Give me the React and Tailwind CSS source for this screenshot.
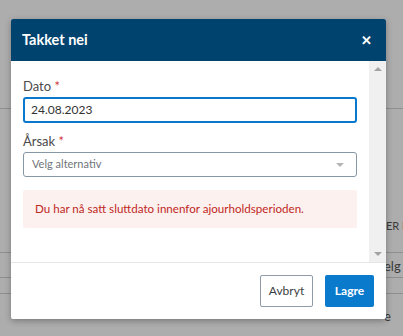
import React from 'react';

function Label({ children }) {
  return (
    <label className="block text-[13px] leading-[18px] text-[#4a4a4a] mb-[2px]">
      {children} <span className="text-[#d0393e]">*</span>
    </label>
  );
}

export default function App() {
  return (
    <div
      className="relative w-[403px] h-[336px] overflow-hidden bg-[#adadad]"
      style={{ fontFamily: 'Lato, "Noto Sans", sans-serif' }}
    >
      {/* page behind the overlay */}
      <div className="absolute left-0 right-0 top-[108px] h-px bg-[#8e8e8e]" />
      <div className="absolute left-0 right-0 top-[252px] h-px bg-[#8e8e8e]" />
      <div className="absolute left-0 right-0 top-[277px] h-px bg-[#8e8e8e]" />
      <div className="absolute left-0 right-0 top-[293px] h-px bg-[#8e8e8e]" />
      <div className="absolute left-[386px] right-0 top-[218px] text-[11px] text-[#3a3a3a] whitespace-nowrap overflow-hidden">ER P</div>
      <div className="absolute left-[384px] right-0 top-[257px] text-[13px] text-[#3a3a3a] whitespace-nowrap overflow-hidden">elg a</div>
      <div className="absolute left-[384px] top-[307px] text-[13px] text-[#3a3a3a] whitespace-nowrap">e</div>

      {/* modal */}
      <div className="absolute left-[11px] top-[19px] w-[375px] h-[300px] bg-white rounded-[2px] shadow-[0_2px_6px_rgba(0,0,0,0.3)] flex flex-col overflow-hidden">
        <div className="h-[42px] bg-[#00436e] flex items-center justify-between pl-[11px] pr-[14px]">
          <h2 className="text-[14.5px] font-bold text-white">Takket nei</h2>
          <span className="text-white text-[13px] font-bold leading-none">✕</span>
        </div>

        <div className="flex h-[202px] border-b border-[#e6e6e6]">
          <div className="flex-1 pl-[12px] pr-[12px] pt-[16px]">
            <Label>Dato</Label>
            <div className="h-[26px] border-2 border-[#0a78cc] rounded-[3px] flex items-center px-[6px] text-[12px] text-[#333]">
              24.08.2023
            </div>
            <div className="mt-[9px]">
              <Label>Årsak</Label>
              <div className="h-[25px] border border-[#8796a3] rounded-[3px] flex items-center justify-between pl-[8px] pr-[12px] text-[11px] text-[#6f757b]">
                <span>Velg alternativ</span>
                <span className="w-0 h-0 border-l-[4px] border-r-[4px] border-t-[4px] border-l-transparent border-r-transparent border-t-[#b5b5b5]" />
              </div>
            </div>
            <div className="mt-[13px] h-[38px] bg-[#fdf1ef] rounded-[2px] flex items-center px-[12px] text-[11.6px] text-[#c0281e]">
              Du har nå satt sluttdato innenfor ajourholdsperioden.
            </div>
          </div>
          <div className="w-[17px] bg-[#f0f0f0] flex flex-col items-center justify-between py-[6px]">
            <span className="w-0 h-0 border-l-[4px] border-r-[4px] border-b-[4px] border-l-transparent border-r-transparent border-b-[#a3a3a3]" />
            <span className="w-0 h-0 border-l-[4px] border-r-[4px] border-t-[4px] border-l-transparent border-r-transparent border-t-[#a3a3a3]" />
          </div>
        </div>

        <div className="flex-1 flex items-start justify-end gap-[12px] pt-[12px] pr-[12px]">
          <button className="h-[32px] w-[53px] border border-[#8f9ca8] rounded-[2px] bg-white text-[12px] text-[#3b3f44]">
            Avbryt
          </button>
          <button className="h-[32px] w-[49px] rounded-[2px] bg-[#0a7acd] text-[12px] font-bold text-white">
            Lagre
          </button>
        </div>
      </div>
    </div>
  );
}
